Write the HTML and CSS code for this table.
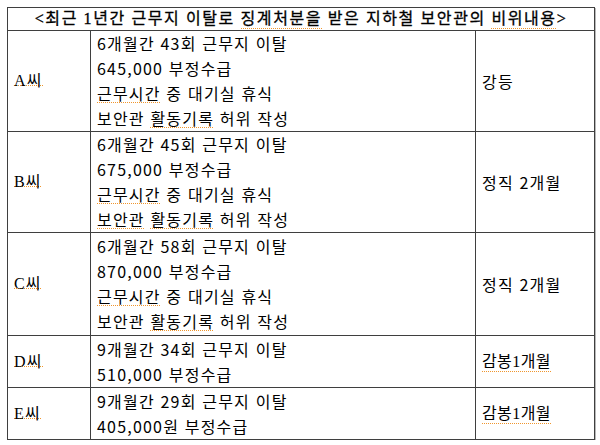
FILE: index.html
```html
<!DOCTYPE html>
<html lang="ko">
<head>
<meta charset="utf-8">
<link rel="stylesheet" href="styles.css">
</head>
<body>
<table class="sheet">
  <colgroup>
    <col class="c-name">
    <col class="c-desc">
    <col class="c-pen">
  </colgroup>
  <tr class="r-head">
    <td colspan="3" class="head">&lt;최근 1년간 근무지 이탈로 <span class="sp">징계처분을</span> 받은 지하철 보안관의 <span class="sp">비위내용</span>&gt;</td>
  </tr>
  <tr>
    <td class="name"><span class="sp">A씨</span></td>
    <td class="desc"><div class="lines four">
      <div>6개월간 43회 근무지 이탈</div>
      <div>645,000 부정수급</div>
      <div><span class="sp">근무시간</span> 중 대기실 휴식</div>
      <div>보안관 <span class="sp">활동기록</span> 허위 작성</div>
    </div></td>
    <td class="pen">강등</td>
  </tr>
  <tr>
    <td class="name"><span class="sp">B씨</span></td>
    <td class="desc"><div class="lines four">
      <div>6개월간 45회 근무지 이탈</div>
      <div>675,000 부정수급</div>
      <div><span class="sp">근무시간</span> 중 대기실 휴식</div>
      <div><span class="sp">보안관</span> <span class="sp">활동기록</span> 허위 작성</div>
    </div></td>
    <td class="pen">정직 2개월</td>
  </tr>
  <tr>
    <td class="name"><span class="sp">C씨</span></td>
    <td class="desc"><div class="lines four c">
      <div>6개월간 58회 근무지 이탈</div>
      <div>870,000 부정수급</div>
      <div><span class="sp">근무시간</span> 중 대기실 휴식</div>
      <div>보안관 <span class="sp">활동기록</span> 허위 작성</div>
    </div></td>
    <td class="pen">정직 2개월</td>
  </tr>
  <tr>
    <td class="name"><span class="sp">D씨</span></td>
    <td class="desc"><div class="lines two">
      <div>9개월간 34회 근무지 이탈</div>
      <div>510,000 부정수급</div>
    </div></td>
    <td class="pen serif"><span class="sp">감봉1개월</span></td>
  </tr>
  <tr>
    <td class="name"><span class="sp">E씨</span></td>
    <td class="desc"><div class="lines two">
      <div>9개월간 29회 근무지 이탈</div>
      <div>405,000원 부정수급</div>
    </div></td>
    <td class="pen serif"><span class="sp">감봉1개월</span></td>
  </tr>
</table>
</body>
</html>
```

FILE: styles.css
```css
html, body {
  margin: 0;
  padding: 0;
  background: #ffffff;
}

body {
  padding: 7px 0 0 7px;
  font-family: "Noto Sans CJK KR", "Noto Sans", sans-serif;
  color: #000000;
}

.sheet {
  border-collapse: collapse;
  table-layout: fixed;
  width: 587px;
  box-shadow: 1px 1px 0 #b8b8b8;
}

.c-name { width: 83px; }
.c-desc { width: 385px; }
.c-pen { width: 119px; }

.sheet td {
  border: 1px solid #3f3f3f;
  padding: 0 0 0 6px;
  vertical-align: middle;
  font-size: 16px;
  letter-spacing: 1.2px;
  white-space: nowrap;
}

.head {
  height: 22px;
  line-height: 22px;
  text-align: center;
  font-family: "Liberation Serif", "Noto Sans CJK KR", serif;
  letter-spacing: 1.6px !important;
  padding: 0 !important;
  -webkit-text-stroke: 0.3px #000;
}

.name {
  font-family: "Liberation Serif", "Noto Sans CJK KR", serif;
  line-height: 20px;
}

.pen {
  line-height: 20px;
}

.serif {
  font-family: "Liberation Serif", "Noto Sans CJK KR", serif;
  letter-spacing: 0.4px !important;
}

.lines.four {
  line-height: 25px;
}

.lines.four.c {
  padding: 1px 0;
}

.lines.two {
  line-height: 25px;
  padding: 0.5px 0;
}

.sp {
  background-image: linear-gradient(to right, #f0962e 50%, rgba(255, 255, 255, 0) 50%);
  background-size: 2px 1px;
  background-repeat: repeat-x;
  background-position: 0 calc(100% - 3px);
}

.desc .sp,
.pen .sp,
.head .sp {
  display: inline-block;
  line-height: 22px;
  background-position: 0 calc(100% - 1px);
}
```
